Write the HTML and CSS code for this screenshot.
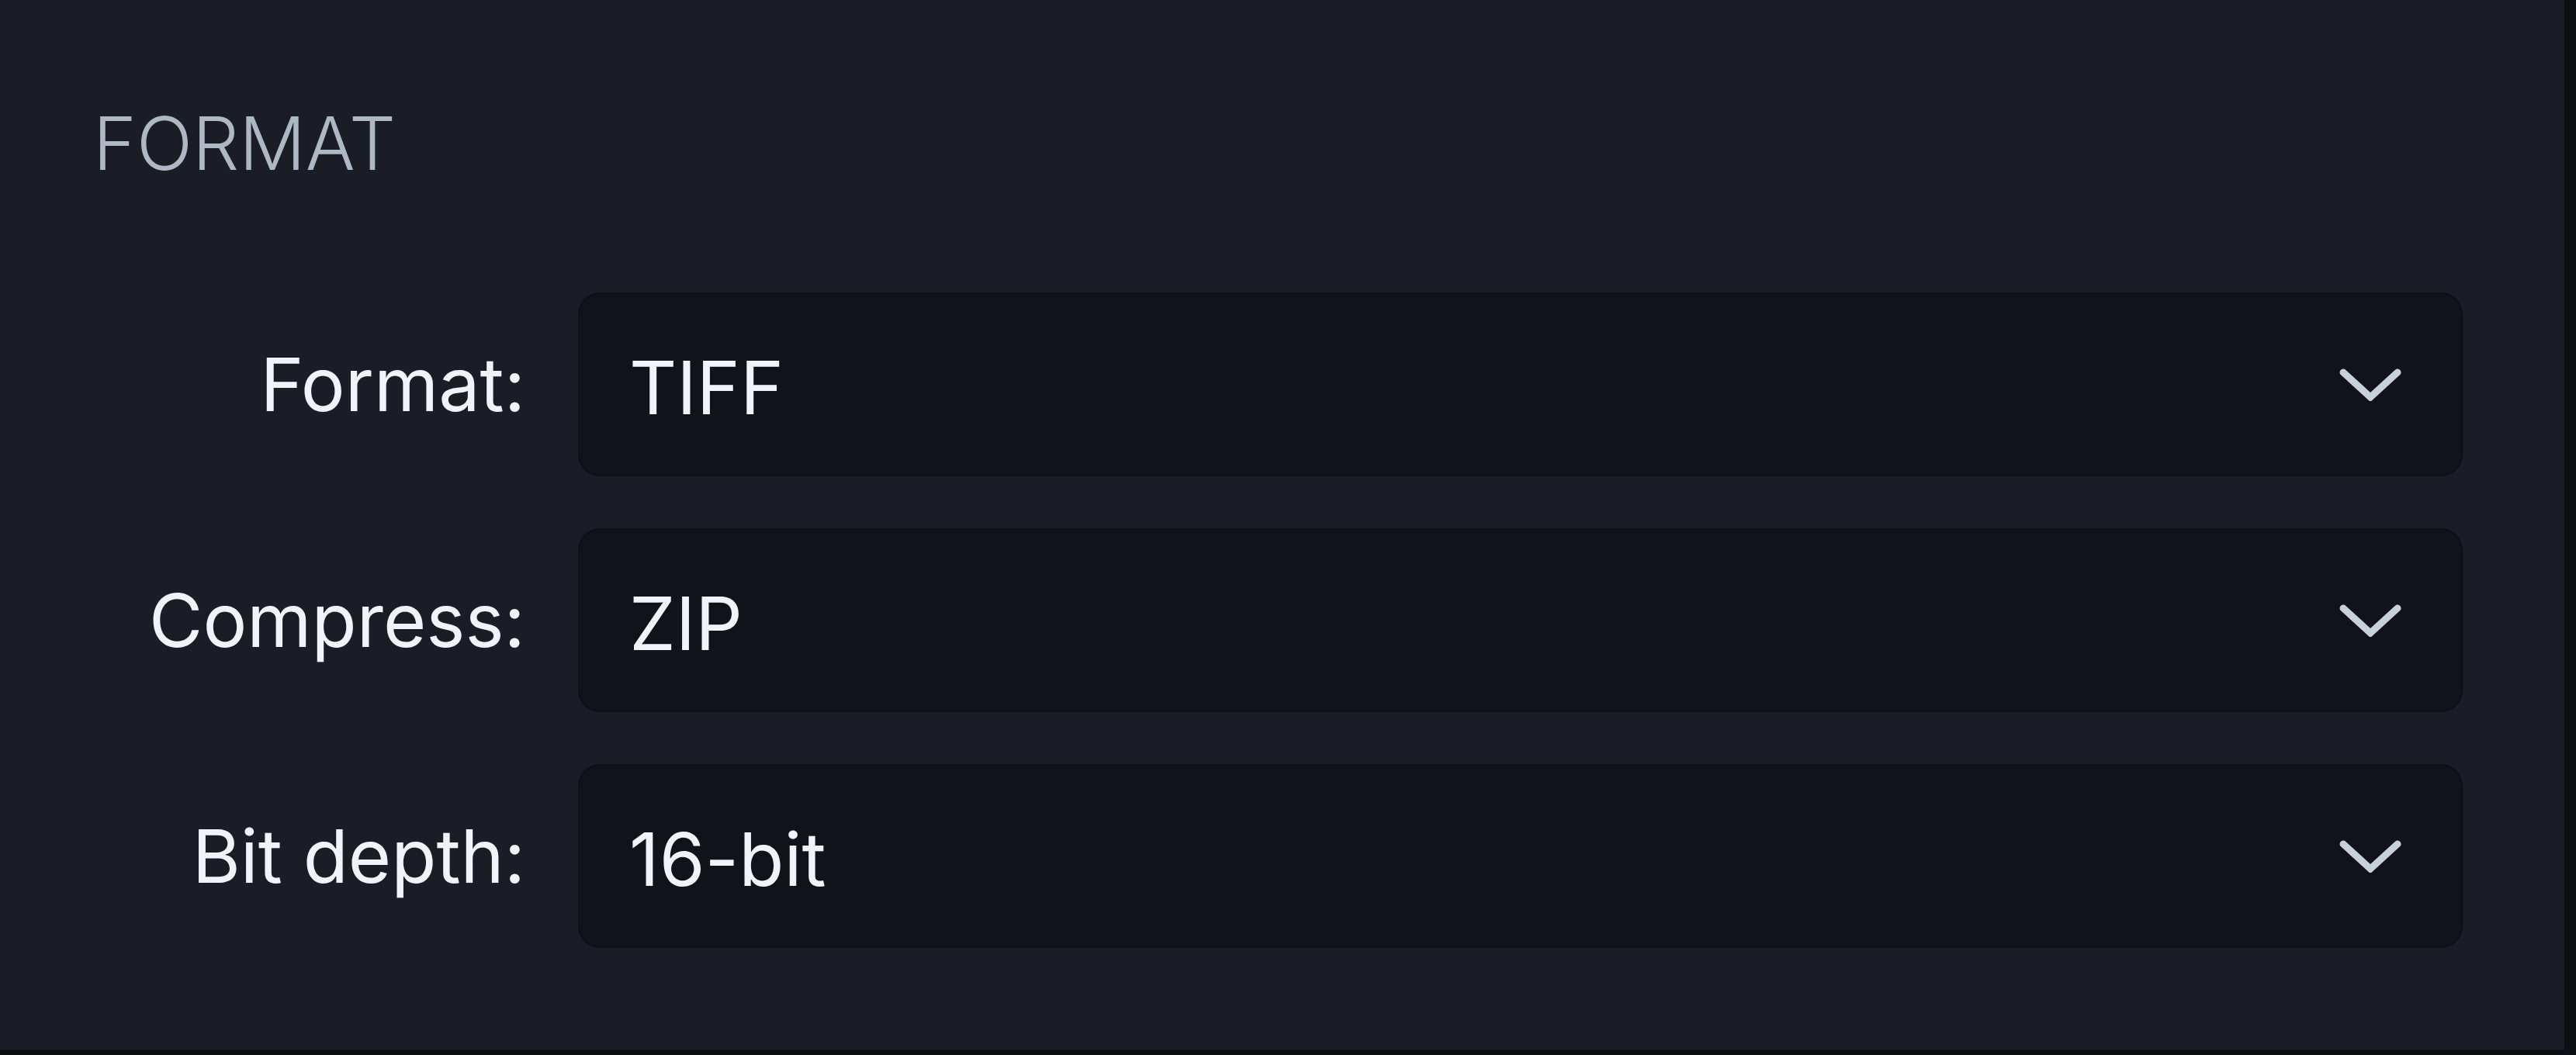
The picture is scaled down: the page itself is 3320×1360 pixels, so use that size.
FILE: index.html
```html
<!DOCTYPE html>
<html>
<head>
<meta charset="utf-8">
<link rel="stylesheet" href="styles.css">
</head>
<body>
<div class="panel">
  <div class="section-title">FORMAT</div>
  <div class="form">
    <div class="label">Format:</div>
    <div class="select"><span class="value">TIFF</span><svg class="chev" viewBox="0 0 80 42"><polyline points="5,5 40,37 75,5"/></svg></div>
    <div class="label">Compress:</div>
    <div class="select"><span class="value">ZIP</span><svg class="chev" viewBox="0 0 80 42"><polyline points="5,5 40,37 75,5"/></svg></div>
    <div class="label">Bit depth:</div>
    <div class="select"><span class="value">16-bit</span><svg class="chev" viewBox="0 0 80 42"><polyline points="5,5 40,37 75,5"/></svg></div>
  </div>
</div>
</body>
</html>
```
FILE: styles.css
```css
html, body {
  margin: 0;
  padding: 0;
  background: #0e0f13;
  width: 3320px;
  height: 1360px;
  overflow: hidden;
}
.panel {
  width: 3305px;
  height: 1353px;
  background: #1a1d26;
  box-sizing: border-box;
  padding: 137px 131px 0 120px;
  font-family: Inter, "Noto Sans", sans-serif;
}
.section-title {
  font-size: 95px;
  line-height: 1;
  font-weight: 300;
  color: #aeb8c4;
}
.form {
  margin-top: 145px;
  display: grid;
  grid-template-columns: 557px 1fr;
  column-gap: 68px;
  row-gap: 67px;
  align-items: center;
}
.label {
  text-align: right;
  font-size: 95px;
  color: #f0f3f8;
  line-height: 1;
}
.select {
  height: 237px;
  box-sizing: border-box;
  background: #121318;
  border: 2px solid #0f1015;
  border-radius: 28px;
  display: flex;
  align-items: center;
  justify-content: space-between;
  padding: 8px 77px 0 64px;
}
.value {
  font-size: 95px;
  color: #f0f3f8;
  line-height: 1;
}
.chev {
  width: 80px;
  height: 42px;
  margin-top: -8px;
  fill: none;
  stroke: #c8d0da;
  stroke-width: 9;
  stroke-linecap: round;
  stroke-linejoin: miter;
}
```
